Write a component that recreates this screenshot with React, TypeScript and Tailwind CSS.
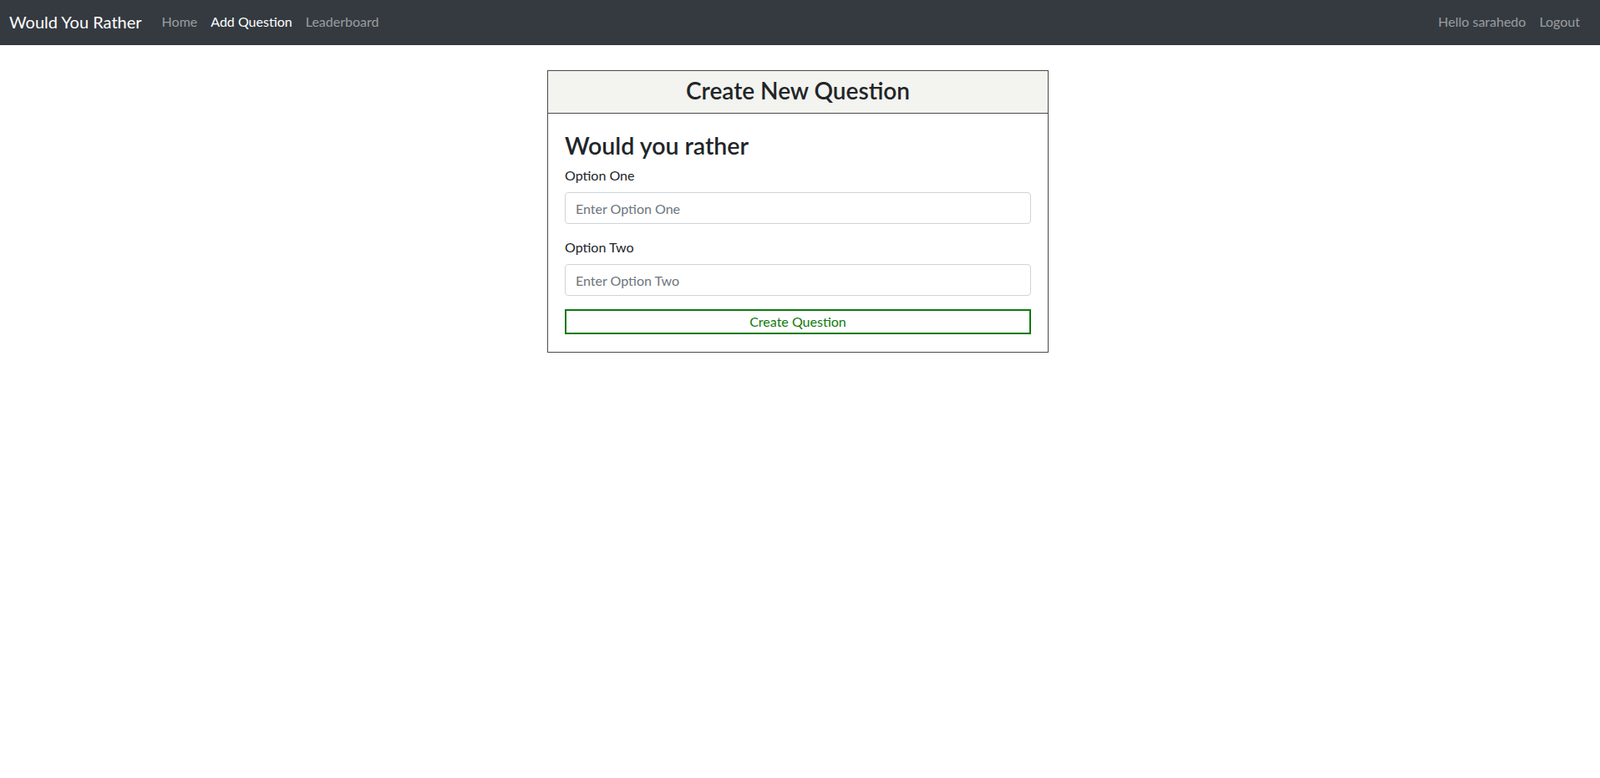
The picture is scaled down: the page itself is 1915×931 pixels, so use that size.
import { useState } from "react";

const font = { fontFamily: 'Lato, "Open Sans", sans-serif' };

function NavBar() {
  return (
    <nav className="flex h-[54px] items-center justify-between bg-[#343a40] pb-[2px] pl-[11px] pr-4">
      <div className="flex items-center">
        <span className="mr-4 text-[20px] leading-[30px] text-white">Would You Rather</span>
        <a className="px-2 text-[16px] leading-6 text-white/50">Home</a>
        <a className="px-2 text-[16px] leading-6 text-white">Add Question</a>
        <a className="px-2 text-[16px] leading-6 text-white/50">Leaderboard</a>
      </div>
      <div className="flex items-center">
        <span className="px-2 text-[16px] leading-6 text-white/50">Hello sarahedo</span>
        <a className="px-2 text-[16px] leading-6 text-white/50">Logout</a>
      </div>
    </nav>
  );
}

export default function App() {
  const [one, setOne] = useState("");
  const [two, setTwo] = useState("");

  return (
    <div className="min-h-screen bg-white text-[#212529]" style={font}>
      <NavBar />
      <div className="flex justify-center pr-[5px] pt-[30px]">
        <div className="w-[600px] border border-[#4a4a4a]">
          <div className="flex h-[51px] items-center justify-center border-b border-[#4a4a4a] bg-[#f3f3ef] pb-[3px]">
            <h3 className="text-[28px] leading-[1.2] font-semibold">Create New Question</h3>
          </div>
          <form className="px-5 pt-5 pb-[21px]" onSubmit={(e) => e.preventDefault()}>
            <h3 className="mb-[5px] text-[28.5px] leading-[1.3] font-semibold">Would you rather</h3>
            <div className="mb-4">
              <label className="mb-2 block text-[16px] leading-6">Option One</label>
              <input
                value={one}
                onChange={(e) => setOne(e.target.value)}
                placeholder="Enter Option One"
                className="block h-[38px] w-full rounded border border-[#ced4da] px-3 text-[16px] placeholder:text-[#6c757d] outline-none"
              />
            </div>
            <div className="mb-4">
              <label className="mb-2 block text-[16px] leading-6">Option Two</label>
              <input
                value={two}
                onChange={(e) => setTwo(e.target.value)}
                placeholder="Enter Option Two"
                className="block h-[38px] w-full rounded border border-[#ced4da] px-3 text-[16px] placeholder:text-[#6c757d] outline-none"
              />
            </div>
            <button
              type="submit"
              className="block h-[30px] w-full border-2 border-[#0d7a0d] bg-white text-[16px] leading-6 text-[#0d7a0d]"
            >
              Create Question
            </button>
          </form>
        </div>
      </div>
    </div>
  );
}
